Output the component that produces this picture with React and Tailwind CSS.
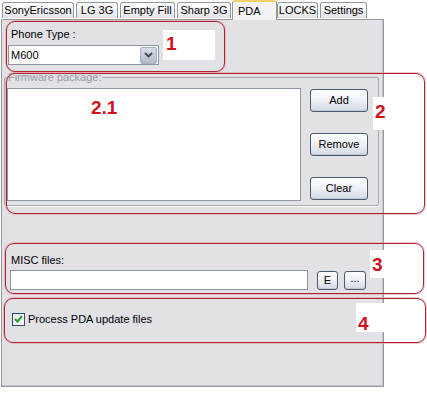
import React from "react";

const tabs = [
  { label: "SonyEricsson", cls: "ml-[2px] w-[72px]" },
  { label: "LG 3G", cls: "ml-[2px] w-[42px]" },
  { label: "Empty Fill", cls: "ml-[2px] w-[55px]" },
  { label: "Sharp 3G", cls: "ml-[2px] w-[54px]" },
  { label: "PDA", cls: "ml-[1px] w-[45px]", active: true },
  { label: "LOCKS", cls: "ml-0 w-[41px]" },
  { label: "Settings", cls: "ml-[2px] w-[47px]" },
];

const XpButton = ({ children, className }) => (
  <button
    className={
      "flex items-center justify-center rounded-[3px] border border-[#4d5a6e] bg-gradient-to-b from-[#ffffff] via-[#eef0f5] to-[#d3d8e4] text-[11px] text-black shadow-[inset_0_-1px_0_#bfc6d6] " +
      className
    }
  >
    {children}
  </button>
);

const Mark = ({ className }) => (
  <div
    className={
      "absolute rounded-[9px] border border-[#a82634] shadow-[0_0_0_1px_rgba(240,150,160,0.55)] " +
      className
    }
  />
);

export default function App() {
  return (
    <div
      className="relative w-[427px] h-[395px] bg-white overflow-hidden text-[11px] text-black"
      style={{ fontFamily: '"Liberation Sans", Arial, sans-serif' }}
    >
      {/* tabs */}
      <div className="flex items-end h-[19px] relative z-10">
        {tabs.map((t) =>
          t.active ? (
            <div
              key={t.label}
              className={
                "h-[20px] -mb-px bg-[#f3f3f5] border border-b-0 border-[#919b9c] border-t-2 border-t-[#f2cf6a] rounded-t-[3px] flex items-start pt-[1px] pl-[5px] " +
                t.cls
              }
            >
              {t.label}
            </div>
          ) : (
            <div
              key={t.label}
              className={
                "h-[16px] mb-px bg-gradient-to-b from-[#ffffff] to-[#e3e3e9] border border-b-0 border-[#919b9c] rounded-t-[3px] flex items-center justify-center " +
                t.cls
              }
            >
              {t.label}
            </div>
          )
        )}
      </div>

      {/* panel */}
      <div className="ml-px w-[383px] h-[368px] border border-[#919b9c] bg-[#e1e1e6] shadow-[inset_-1px_-1px_0_#c4c4ca] flex flex-col">
        <div className="mt-[8px] ml-[9px] h-[13px] leading-[13px]">Phone Type :</div>
        <div className="mt-[4px] ml-[6px] w-[151px] h-[20px] bg-white border border-[#8e96a4] flex items-center justify-between pl-[2px] pr-px">
          <span>M600</span>
          <div className="w-[17px] h-[17px] rounded-[2px] bg-gradient-to-b from-[#d9dde7] to-[#b3bac9] border border-[#aab2c2] flex items-center justify-center">
            <svg width="9" height="6" viewBox="0 0 9 6">
              <path d="M1 1 L4.5 4.5 L8 1" stroke="#3a4250" strokeWidth="1.8" fill="none" />
            </svg>
          </div>
        </div>

        <fieldset className="mt-[6px] ml-[2px] w-[375px] border border-[#a7a7ae] rounded-[2px] pb-[4px] shadow-[0_1px_0_#ffffff]">
          <legend className="ml-[3px] h-[13px] leading-[13px] text-[#9a9aa2]">Firmware package:</legend>
          <div className="flex mt-[4px]">
            <div className="ml-[2px] w-[294px] h-[113px] bg-white border border-[#8e96a4]" />
            <div className="ml-[9px] mt-px flex flex-col gap-[21px]">
              <XpButton className="w-[58px] h-[23px]">Add</XpButton>
              <XpButton className="w-[58px] h-[23px]">Remove</XpButton>
              <XpButton className="w-[58px] h-[23px]">Clear</XpButton>
            </div>
          </div>
        </fieldset>

        <div className="mt-[48px] ml-[9px] h-[13px] leading-[13px]">MISC files:</div>
        <div className="mt-[3px] ml-[8px] flex items-center">
          <div className="w-[298px] h-[20px] bg-white border border-[#8e96a4]" />
          <XpButton className="ml-[9px] w-[21px] h-[19px]">E</XpButton>
          <XpButton className="ml-[6px] w-[22px] h-[19px] pb-[3px]">...</XpButton>
        </div>

        <div className="mt-[21px] ml-[10px] flex items-center gap-[3px]">
          <div className="w-[13px] h-[13px] bg-gradient-to-br from-[#e6e6e6] to-white border border-[#2d4d6e] flex items-center justify-center">
            <svg width="9" height="8" viewBox="0 0 9 8">
              <path d="M1 4 L3.5 6.5 L8 1.2" stroke="#21a121" strokeWidth="2" fill="none" />
            </svg>
          </div>
          <span>Process PDA update files</span>
        </div>
      </div>

      {/* annotations */}
      <Mark className="left-[6px] top-[21px] w-[219px] h-[51px]" />
      <Mark className="left-[6px] top-[73px] w-[419px] h-[141px]" />
      <Mark className="left-[5px] top-[243px] w-[419px] h-[51px]" />
      <Mark className="left-[4px] top-[298px] w-[422px] h-[45px]" />

      <div className="absolute left-[163px] top-[30px] w-[52px] h-[30px] bg-white pl-[3px] pt-[3px] text-[19px] font-bold leading-[22px] text-[#d3101c]">1</div>
      <div className="absolute left-[373px] top-[97px] w-[27px] h-[33px] bg-white pl-[2px] pt-[4px] text-[19px] font-bold leading-[22px] text-[#d3101c]">2</div>
      <div className="absolute left-[91px] top-[97px] text-[19px] font-bold leading-[22px] text-[#d3101c]">2.1</div>
      <div className="absolute left-[370px] top-[250px] w-[16px] h-[28px] bg-white pl-[2px] pt-[4px] text-[19px] font-bold leading-[22px] text-[#d3101c]">3</div>
      <div className="absolute left-[356px] top-[303px] w-[30px] h-[29px] bg-white pl-[2px] pt-[10px] text-[19px] font-bold leading-[22px] text-[#d3101c]">4</div>
    </div>
  );
}
